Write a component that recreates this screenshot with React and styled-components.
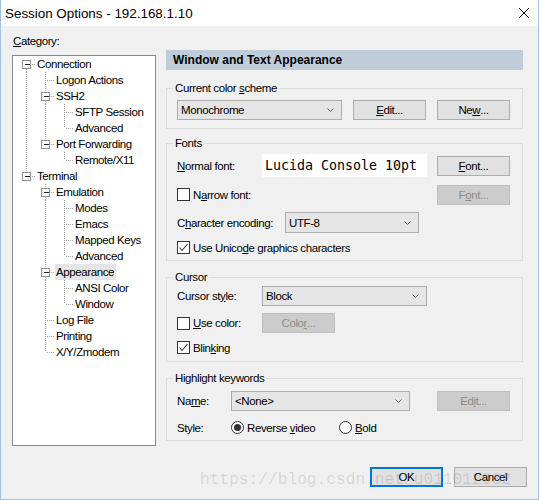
import styled, { createGlobalStyle } from 'styled-components'

const GlobalStyle = createGlobalStyle`
  html, body {
    margin: 0;
    padding: 0;
    background: #ffffff;
  }
  body {
    font-family: "Liberation Sans", Arial, sans-serif;
    font-size: 11.5px;
    letter-spacing: -0.4px;
    color: #000;
  }
`

const tree = [
  {
    label: 'Connection',
    children: [
      { label: 'Logon Actions' },
      { label: 'SSH2', children: [{ label: 'SFTP Session' }, { label: 'Advanced' }] },
      { label: 'Port Forwarding', children: [{ label: 'Remote/X11' }] },
    ],
  },
  {
    label: 'Terminal',
    children: [
      {
        label: 'Emulation',
        children: [{ label: 'Modes' }, { label: 'Emacs' }, { label: 'Mapped Keys' }, { label: 'Advanced' }],
      },
      { label: 'Appearance', selected: true, children: [{ label: 'ANSI Color' }, { label: 'Window' }] },
      { label: 'Log File' },
      { label: 'Printing' },
      { label: 'X/Y/Zmodem' },
    ],
  },
]

// flatten the tree into rows, keeping what the guide lines need
const flatten = (nodes, level = 0, cont = [], out = []) => {
  nodes.forEach((n, i) => {
    const hasNext = i < nodes.length - 1
    out.push({
      label: n.label,
      selected: n.selected,
      level,
      cont,
      hasNext,
      hasChildren: !!n.children,
      first: level === 0 && i === 0,
    })
    if (n.children) flatten(n.children, level + 1, [...cont, hasNext], out)
  })
  return out
}

const rows = flatten(tree)
const cx = (l) => 13 + 19 * l

const Window = styled.div`
  position: relative;
  width: 539px;
  height: 500px;
  box-sizing: border-box;
  border: 1px solid #9fc3e7;
  border-top: none;
  background: #f0f0f0;
  display: flex;
  flex-direction: column;
  overflow: hidden;
`

const TitleBar = styled.div`
  height: 26px;
  flex-shrink: 0;
  background: #ffffff;
  display: flex;
  align-items: center;
  justify-content: space-between;
  padding: 0 9px 0 4px;
  font-size: 13.4px;
  letter-spacing: 0;
`

const Content = styled.div`
  display: flex;
  gap: 10px;
  padding: 8px 15px 0 11px;
`

const LeftCol = styled.div`
  width: 144px;
  flex-shrink: 0;
  display: flex;
  flex-direction: column;
`

const Caption = styled.div`
  line-height: 14px;
  height: 14px;
  margin-bottom: 7px;
  padding-left: 1px;
`

const TreeBox = styled.div`
  height: 391px;
  box-sizing: border-box;
  border: 1px solid #828790;
  background: #ffffff;
`

const TreeRow = styled.div`
  height: 16px;
  display: flex;
  align-items: center;
`

const TreeLabel = styled.span`
  height: 16px;
  line-height: 16px;
  padding: 0 2px 0 1px;
  white-space: nowrap;
  background: ${(p) => (p.$selected ? '#e5e5e5' : 'transparent')};
`

const RightCol = styled.div`
  flex: 1;
  padding-top: 16px;
  display: flex;
  flex-direction: column;
`

const Header = styled.div`
  height: 20px;
  line-height: 20px;
  background: #bfcddb;
  padding-left: 7px;
  font-weight: bold;
  font-size: 12px;
  letter-spacing: 0;
`

const Group = styled.fieldset`
  margin: ${(p) => p.$mt}px 0 0;
  padding: ${(p) => p.$pt}px 12px ${(p) => p.$pb}px 10px;
  border: 1px solid #dcdcdc;
  min-width: 0;
  display: flex;
  flex-direction: column;
  gap: ${(p) => p.$gap || 0}px;
`

const Legend = styled.legend`
  padding: 0 2px;
  margin-left: -4px;
  line-height: 14px;
`

const Row = styled.div`
  height: ${(p) => p.$h}px;
  display: flex;
  align-items: center;
`

const Label = styled.span`
  width: ${(p) => p.$w}px;
  flex-shrink: 0;
  white-space: nowrap;
`

const U = styled.span`
  text-decoration: underline;
`

const Select = styled.div`
  width: ${(p) => p.$w}px;
  height: ${(p) => p.$h || 20}px;
  box-sizing: border-box;
  border: 1px solid #adadad;
  background: #e5e5e5;
  display: flex;
  align-items: center;
  justify-content: space-between;
  padding: 0 7px 0 3px;
  flex-shrink: 0;
`

const Button = styled.div`
  width: 73px;
  height: 20px;
  box-sizing: border-box;
  border: ${(p) => (p.$default ? '2px solid #0078d7' : `1px solid ${p.$disabled ? '#bfbfbf' : '#adadad'}`)};
  background: ${(p) => (p.$disabled ? '#cccccc' : '#e1e1e1')};
  color: ${(p) => (p.$disabled ? '#8d8d8d' : '#000')};
  display: flex;
  align-items: center;
  justify-content: center;
  flex-shrink: 0;
  margin-left: ${(p) => (p.$right ? 'auto' : p.$gapLeft ? `${p.$gapLeft}px` : '0')};
`

const FontBox = styled.div`
  width: 165px;
  height: 23px;
  box-sizing: border-box;
  background: #ffffff;
  padding-left: 3px;
  display: flex;
  align-items: center;
  font-family: "DejaVu Sans Mono", "Liberation Mono", monospace;
  font-size: 13.3px;
  letter-spacing: 0;
  flex-shrink: 0;
`

const Choice = styled.label`
  display: flex;
  align-items: center;
  gap: 3px;
  width: ${(p) => (p.$w ? `${p.$w}px` : 'auto')};
  flex-shrink: 0;
  white-space: nowrap;
`

const Box = styled.span`
  width: 13px;
  height: 13px;
  box-sizing: border-box;
  border: 1px solid #333333;
  background: #ffffff;
  border-radius: ${(p) => (p.$round ? '50%' : '0')};
  display: flex;
  align-items: center;
  justify-content: center;
  flex-shrink: 0;
`

const Dot = styled.span`
  width: 7px;
  height: 7px;
  border-radius: 50%;
  background: #333333;
`

const Footer = styled.div`
  display: flex;
  justify-content: flex-end;
  gap: 11px;
  padding: 21px 11px 12px 0;
`

const Watermark = styled.div`
  position: absolute;
  left: 199px;
  top: 470px;
  font-family: "Liberation Mono", "Courier New", monospace;
  font-size: 16.2px;
  letter-spacing: 0;
  line-height: 20px;
  color: rgba(0, 0, 0, 0.12);
  white-space: nowrap;
  pointer-events: none;
`

function Chevron() {
  return (
    <svg width="7" height="4" viewBox="0 0 7 4">
      <path d="M0.5 0.5 L3.5 3.5 L6.5 0.5" fill="none" stroke="#606060" strokeWidth="1" />
    </svg>
  )
}

function Check({ checked, children }) {
  return (
    <Choice>
      <Box>
        {checked && (
          <svg width="11" height="11" viewBox="0 0 11 11">
            <path d="M1.5 5.5 L4 8.5 L9.5 2" fill="none" stroke="#333" strokeWidth="1.1" />
          </svg>
        )}
      </Box>
      <span>{children}</span>
    </Choice>
  )
}

function Radio({ checked, w, children }) {
  return (
    <Choice $w={w}>
      <Box $round>{checked && <Dot />}</Box>
      <span>{children}</span>
    </Choice>
  )
}

function Guides({ row }) {
  const { level, cont, hasNext, hasChildren, first } = row
  const x = cx(level) + 0.5
  const dots = { stroke: '#a0a0a0', strokeWidth: 1, strokeDasharray: '1 1', shapeRendering: 'crispEdges' }
  return (
    <svg width={cx(level) + 10} height="16" style={{ flexShrink: 0 }}>
      {cont.map((c, a) => c && <line key={a} x1={cx(a) + 0.5} y1="0" x2={cx(a) + 0.5} y2="16" {...dots} />)}
      {!first && <line x1={x} y1="0" x2={x} y2={hasChildren ? 4 : 8} {...dots} />}
      {hasNext && <line x1={x} y1={hasChildren ? 13 : 8} x2={x} y2="16" {...dots} />}
      <line x1={hasChildren ? x + 5 : x + 1} y1="8.5" x2={x + 9.5} y2="8.5" {...dots} />
      {hasChildren && (
        <g shapeRendering="crispEdges">
          <rect x={x - 4} y="4.5" width="8" height="8" fill="#fff" stroke="#919191" />
          <line x1={x - 2} y1="8.5" x2={x + 3} y2="8.5" stroke="#222" />
        </g>
      )}
    </svg>
  )
}

export default function App() {
  return (
    <>
      <GlobalStyle />
      <Window>
        <TitleBar>
          <span>Session Options - 192.168.1.10</span>
          <svg width="10" height="10" viewBox="0 0 10 10">
            <path d="M0 0 L10 10 M10 0 L0 10" stroke="#000" strokeWidth="1" />
          </svg>
        </TitleBar>

        <Content>
          <LeftCol>
            <Caption><U>C</U>ategory:</Caption>
            <TreeBox>
              {rows.map((r, i) => (
                <TreeRow key={i}>
                  <Guides row={r} />
                  <TreeLabel $selected={r.selected}>{r.label}</TreeLabel>
                </TreeRow>
              ))}
            </TreeBox>
          </LeftCol>

          <RightCol>
            <Header>Window and Text Appearance</Header>

            <Group $mt={11} $pt={5} $pb={8}>
              <Legend>Current color <U>s</U>cheme</Legend>
              <Row $h={20}>
                <Select $w={165}>
                  <span>Monochrome</span>
                  <Chevron />
                </Select>
                <Button $gapLeft={11}><U>E</U>dit...</Button>
                <Button $right>Ne<U>w</U>...</Button>
              </Row>
            </Group>

            <Group $mt={7} $pt={4} $pb={5} $gap={7}>
              <Legend>Fonts</Legend>
              <Row $h={23}>
                <Label $w={85}><U>N</U>ormal font:</Label>
                <FontBox>Lucida Console 10pt</FontBox>
                <Button $right><U>F</U>ont...</Button>
              </Row>
              <Row $h={21}>
                <Check>N<U>a</U>rrow font:</Check>
                <Button $right $disabled>F<U>o</U>nt...</Button>
              </Row>
              <Row $h={21}>
                <Label $w={108}>C<U>h</U>aracter encoding:</Label>
                <Select $w={134} $h={21}>
                  <span>UTF-8</span>
                  <Chevron />
                </Select>
              </Row>
              <Row $h={15}>
                <Check checked>Use Unico<U>d</U>e graphics characters</Check>
              </Row>
            </Group>

            <Group $mt={9} $pt={2} $pb={6} $gap={7}>
              <Legend>Cursor</Legend>
              <Row $h={20}>
                <Label $w={85}>Cursor st<U>y</U>le:</Label>
                <Select $w={165}>
                  <span>Block</span>
                  <Chevron />
                </Select>
              </Row>
              <Row $h={20}>
                <Label $w={85}><Check><U>U</U>se color:</Check></Label>
                <Button $disabled>Colo<U>r</U>...</Button>
              </Row>
              <Row $h={15}>
                <Check checked>Blin<U>k</U>ing</Check>
              </Row>
            </Group>

            <Group $mt={9} $pt={6} $pb={5} $gap={9}>
              <Legend>Highlight keywords</Legend>
              <Row $h={20}>
                <Label $w={54}>Na<U>m</U>e:</Label>
                <Select $w={179}>
                  <span>&lt;None&gt;</span>
                  <Chevron />
                </Select>
                <Button $right $disabled>Ed<U>i</U>t...</Button>
              </Row>
              <Row $h={15}>
                <Label $w={54}>Style:</Label>
                <Radio checked w={108}>Reverse <U>v</U>ideo</Radio>
                <Radio><U>B</U>old</Radio>
              </Row>
            </Group>
          </RightCol>
        </Content>

        <Footer>
          <Button $default>OK</Button>
          <Button>Cancel</Button>
        </Footer>

        <Watermark>https://blog.csdn.net/u011012932</Watermark>
      </Window>
    </>
  )
}
